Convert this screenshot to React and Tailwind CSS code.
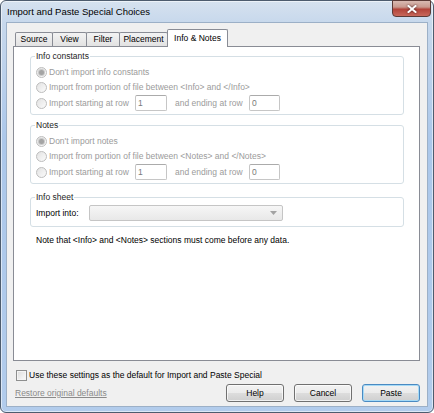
import React from 'react';

const Radio = ({ checked }) => (
    <span className="w-[11px] h-[11px] shrink-0 rounded-full border border-[#bdbdbd] bg-[linear-gradient(135deg,#e2e2e2,#fbfbfb)] flex items-center justify-center">
        {checked && <span className="w-[5px] h-[5px] rounded-full bg-[#a4a4a4] shadow-[0_0_0_1px_#c9c9c9]" />}
    </span>
);

const RadioRow = ({ checked, label, className }) => (
    <div className={`flex items-center ${className}`}>
        <Radio checked={checked} />
        <span className="ml-[2px] text-[#9b9b9b] whitespace-nowrap">{label}</span>
    </div>
);

const TextBox = ({ value, className }) => (
    <div className={`h-[16px] border border-[#c6c6c6] border-t-[#ababab] rounded-[2px] bg-white pl-[2px] flex items-center text-[#7a7a7a] ${className}`}>
        {value}
    </div>
);

const RangeRow = () => (
    <div className="flex items-center h-[16px]">
        <Radio />
        <span className="ml-[2px] w-[86px] text-[#9b9b9b] whitespace-nowrap">Import starting at row</span>
        <TextBox value="1" className="w-[32px]" />
        <span className="ml-[8px] w-[74px] text-[#9b9b9b] whitespace-nowrap">and ending at row</span>
        <TextBox value="0" className="w-[31px]" />
    </div>
);

const Group = ({ title, className, children }) => (
    <fieldset className={`border border-[#d5dfe5] rounded-[3px] pl-[5px] pr-[5px] ${className}`}>
        <legend className="-ml-px px-[1px] leading-[11px] text-[#1e1e1e]">{title}</legend>
        {children}
    </fieldset>
);

const Tab = ({ label, width, active }) =>
    active ? (
        <div className={`${width} h-[18px] -mb-px relative z-10 bg-white border border-b-0 border-[#898c95] rounded-t-[2px] flex items-center justify-center pb-[1px] text-black`}>
            {label}
        </div>
    ) : (
        <div className={`${width} h-[14px] -mr-px bg-[linear-gradient(180deg,#f3f3f3,#e2e2e2)] border border-b-0 border-[#898c95] rounded-t-[2px] flex items-center justify-center text-black`}>
            {label}
        </div>
    );

const Button = ({ label, primary }) => (
    <button
        className={`w-[58px] h-[18px] rounded-[3px] border bg-[linear-gradient(180deg,#f2f2f2_0%,#ebebeb_50%,#dddddd_50%,#cfcfcf_100%)] text-black leading-[11px] ${
            primary
                ? 'border-[#4a8ac2] shadow-[inset_0_0_0_1px_#a6daf6]'
                : 'border-[#707070] shadow-[inset_0_0_0_1px_rgba(255,255,255,0.7)]'
        }`}
    >
        {label}
    </button>
);

export default function App() {
    return (
        <div className="w-[434px] h-[413px] flex flex-col rounded-[6px] border border-[#4d5c6e] bg-[linear-gradient(180deg,#d6e2ef_0px,#c7d8ec_22px,#abc7ea_140px,#b2ccec_100%)] shadow-[inset_0_0_0_1px_rgba(255,255,255,0.55)] font-['Liberation_Sans',Arial,sans-serif] text-[8.5px] leading-[11px]">
            {/* title bar */}
            <div className="h-[21px] flex justify-between">
                <span className="pl-[6px] self-center text-[9.5px] text-black whitespace-nowrap">
                    Import and Paste Special Choices
                </span>
                <div className="-mt-px mr-[2px] w-[39px] h-[17px] rounded-b-[4px] border border-[#5b3a36] bg-[linear-gradient(180deg,#d9bab2_0%,#c99a8f_40%,#b2443a_55%,#c8685b_100%)] flex items-center justify-center">
                    <svg width="10" height="8" viewBox="0 0 10 8" className="drop-shadow-[0_0_1px_rgba(60,20,20,0.9)]">
                        <path d="M1.5 1 L8.5 7 M8.5 1 L1.5 7" stroke="#fff" strokeWidth="2" strokeLinecap="square" />
                    </svg>
                </div>
            </div>

            {/* client area */}
            <div className="flex-1 mx-[5px] mb-[5px] border border-[#9cb0c7] bg-[#f0f0f0] flex flex-col pl-[6px] pr-[7px] pt-[6px] pb-[4px]">
                <div className="flex items-end h-[17px] pl-[2px]">
                    <Tab label="Source" width="w-[38px]" />
                    <Tab label="View" width="w-[35px]" />
                    <Tab label="Filter" width="w-[34px]" />
                    <Tab label="Placement" width="w-[49px]" />
                    <Tab label="Info & Notes" width="w-[61px]" active />
                </div>

                <div className="flex-1 border border-[#898c95] bg-white pl-[16px] pr-[15px] pt-[4px] flex flex-col">
                    <Group title="Info constants" className="pb-[3px]">
                        <div className="pt-[2px] flex flex-col">
                            <RadioRow checked label="Don't import info constants" className="h-[16px]" />
                            <RadioRow label="Import from portion of file between <Info> and </Info>" className="h-[15px]" />
                            <RangeRow />
                        </div>
                    </Group>

                    <Group title="Notes" className="mt-[5px] pb-[3px]">
                        <div className="pt-[2px] flex flex-col">
                            <RadioRow checked label="Don't import notes" className="h-[16px]" />
                            <RadioRow label="Import from portion of file between <Notes> and </Notes>" className="h-[15px]" />
                            <RangeRow />
                        </div>
                    </Group>

                    <Group title="Info sheet" className="mt-[8px] pb-[5px]">
                        <div className="pt-[2px] flex items-center h-[18px]">
                            <span className="w-[53px] text-black whitespace-nowrap">Import into:</span>
                            <div className="w-[194px] h-[16px] rounded-[2px] border border-[#c5c5c5] bg-[linear-gradient(180deg,#f6f6f6,#e8e8e8)] flex items-center justify-end pr-[5px]">
                                <svg width="7" height="4" viewBox="0 0 7 4">
                                    <path d="M0 0 H7 L3.5 4 Z" fill="#a3a3a3" />
                                </svg>
                            </div>
                        </div>
                    </Group>

                    <p className="mt-[8px] ml-[6px] text-black whitespace-nowrap">
                        Note that &lt;Info&gt; and &lt;Notes&gt; sections must come before any data.
                    </p>
                </div>

                <div className="mt-[8px] ml-[3px] h-[12px] flex items-center gap-[2px]">
                    <span className="w-[11px] h-[11px] border border-[#8e8f8f] bg-[linear-gradient(135deg,#dcdcdc,#fbfbfb)] shadow-[inset_0_0_0_1px_#f4f4f4]" />
                    <span className="text-black whitespace-nowrap">Use these settings as the default for Import and Paste Special</span>
                </div>

                <div className="mt-[3px] h-[18px] flex items-center justify-between">
                    <span className="ml-[2px] text-[#8a8a8a] underline whitespace-nowrap">Restore original defaults</span>
                    <div className="flex gap-[10px]">
                        <Button label="Help" />
                        <Button label="Cancel" />
                        <Button label="Paste" primary />
                    </div>
                </div>
            </div>
        </div>
    );
}
